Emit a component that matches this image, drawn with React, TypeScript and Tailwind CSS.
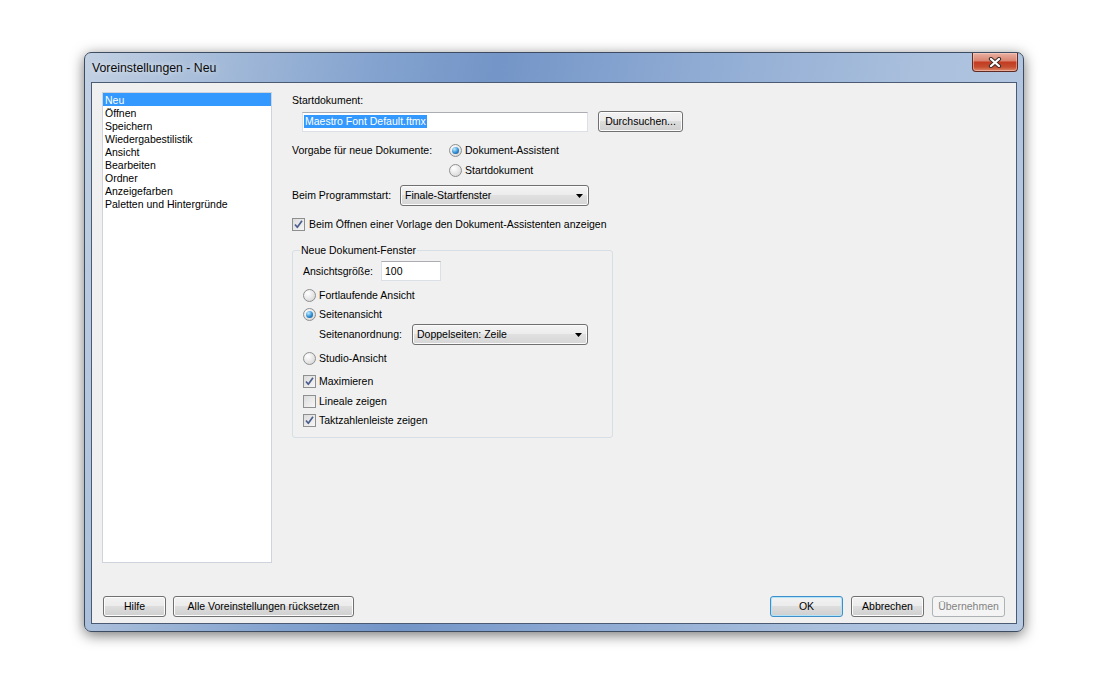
import type { ReactNode } from "react";

const LIST = [
  "Neu",
  "Öffnen",
  "Speichern",
  "Wiedergabestilistik",
  "Ansicht",
  "Bearbeiten",
  "Ordner",
  "Anzeigefarben",
  "Paletten und Hintergründe",
];

function Radio({ checked }: { checked?: boolean }) {
  return (
    <span className="flex h-[13px] w-[13px] shrink-0 items-center justify-center rounded-full border border-[#8e8f8f] bg-[radial-gradient(circle_at_35%_30%,#ffffff,#e6e6e6_55%,#cdcdcd)]">
      {checked && (
        <span className="h-[7px] w-[7px] rounded-full bg-[radial-gradient(circle_at_35%_30%,#c6ecfb,#2d8fd6_55%,#15406f)]" />
      )}
    </span>
  );
}

function Check({ checked }: { checked?: boolean }) {
  return (
    <span className="flex h-[13px] w-[13px] shrink-0 items-center justify-center border border-[#8e8f8f] bg-white">
      <span className="flex h-[11px] w-[11px] items-center justify-center bg-[linear-gradient(135deg,#dcdcdc,#f6f6f6)]">
        {checked && (
          <svg width="11" height="11" viewBox="0 0 11 11">
            <path
              d="M2 5.5 L4.3 8.3 L9 1.8"
              fill="none"
              stroke="#4a5f8f"
              strokeWidth="1.7"
              strokeLinejoin="round"
            />
          </svg>
        )}
      </span>
    </span>
  );
}

function Combo({ value, className }: { value: string; className: string }) {
  return (
    <div
      className={`flex h-[21px] items-center justify-between rounded-[3px] border border-[#707070] bg-[linear-gradient(#f4f4f4,#ececec_49%,#e0e0e0_50%,#d6d6d6)] pl-[4px] pr-[5px] shadow-[inset_0_0_0_1px_#fbfbfb] ${className}`}
    >
      <span>{value}</span>
      <svg width="7" height="4" viewBox="0 0 7 4">
        <path d="M0 0 H7 L3.5 4 Z" fill="#000" />
      </svg>
    </div>
  );
}

function Btn({
  children,
  className,
  primary,
  disabled,
}: {
  children: ReactNode;
  className: string;
  primary?: boolean;
  disabled?: boolean;
}) {
  const look = disabled
    ? "border-[#adb2b5] bg-[#f4f4f4] text-[#838383]"
    : primary
      ? "border-[#3c8fc9] bg-[linear-gradient(#f2f2f2,#ebebeb_49%,#dddddd_50%,#cfcfcf)] shadow-[inset_0_0_0_1px_#b4e4f8] text-black"
      : "border-[#707070] bg-[linear-gradient(#f2f2f2,#ebebeb_49%,#dddddd_50%,#cfcfcf)] shadow-[inset_0_0_0_1px_#fcfcfc] text-black";
  return (
    <div
      className={`flex h-[21px] items-center justify-center rounded-[3px] border ${look} ${className}`}
    >
      {children}
    </div>
  );
}

export default function App() {
  return (
    <div className="h-[700px] w-[1096px] bg-white pl-[84px] pt-[52px] font-['Liberation_Sans',Arial,sans-serif] text-[10.5px] leading-[13px] text-black">
      <div className="flex h-[580px] w-[940px] flex-col rounded-[7px] border border-[#3d4c61] bg-[linear-gradient(100deg,#c3d1e3_0%,#a6bcd9_12%,#84a3cf_28%,#7395c7_40%,#8eaad3_58%,#a9bfdc_80%,#b9cbe3_100%)] shadow-[0_3px_14px_rgba(0,0,0,0.55)]">
        {/* title bar */}
        <div className="flex h-[29px] shrink-0 items-start justify-between">
          <span className="ml-[7px] mt-[8px] text-[12.3px] leading-[15px] text-[#0a0a0a] [text-shadow:0_0_6px_rgba(255,255,255,0.8)]">
            Voreinstellungen - Neu
          </span>
          <div className="mr-[5px] flex h-[19px] w-[46px] items-center justify-center rounded-b-[4px] border border-t-0 border-[#5e2b24] bg-[linear-gradient(#eab1a3,#d98571_42%,#c23c22_52%,#c64e30_78%,#de8a6c)] shadow-[inset_0_0_0_1px_rgba(255,220,210,0.45)]">
            <svg width="16" height="11" viewBox="0 0 16 11">
              <path
                d="M4 2 L12 9 M12 2 L4 9"
                stroke="#3a2a28"
                strokeWidth="4.2"
                strokeLinecap="round"
              />
              <path
                d="M4 2 L12 9 M12 2 L4 9"
                stroke="#ffffff"
                strokeWidth="2.3"
                strokeLinecap="round"
              />
            </svg>
          </div>
        </div>

        {/* client area */}
        <div className="mx-[6px] mb-[7px] flex flex-1 flex-col border border-[#4a5b73] bg-[#f0f0f0]">
          <div className="flex">
            {/* category list */}
            <div className="ml-[10px] mt-[9px] h-[471px] w-[170px] border border-[#cfd3db] bg-white">
              {LIST.map((item, i) => (
                <div
                  key={item}
                  className={`h-[13px] pl-[2px] pt-px leading-[12px] ${i === 0 ? "bg-[#3399ff] text-white" : ""}`}
                >
                  {item}
                </div>
              ))}
            </div>

            {/* settings */}
            <div className="ml-[20px] mt-[9px] flex flex-col">
              <div className="mt-[2px]">Startdokument:</div>
              <div className="mt-[4px] flex items-center">
                <div className="ml-[10px] flex h-[20px] w-[286px] items-center border border-[#dbdfe6] border-t-[#abadb3] bg-white pl-[1px]">
                  <span className="bg-[#3399ff] px-[1px] text-white">
                    Maestro Font Default.ftmx
                  </span>
                </div>
                <Btn className="ml-[10px] w-[85px]">Durchsuchen...</Btn>
              </div>

              <div className="mt-[8px] flex">
                <div className="flex h-[20px] w-[157px] items-center">
                  Vorgabe für neue Dokumente:
                </div>
                <div className="flex flex-col">
                  <div className="flex h-[20px] items-center gap-[3px]">
                    <Radio checked />
                    <span>Dokument-Assistent</span>
                  </div>
                  <div className="flex h-[20px] items-center gap-[3px]">
                    <Radio />
                    <span>Startdokument</span>
                  </div>
                </div>
              </div>

              <div className="mt-[5px] flex items-center">
                <div className="w-[108px]">Beim Programmstart:</div>
                <Combo value="Finale-Startfenster" className="w-[189px]" />
              </div>

              <div className="mt-[8px] flex h-[20px] items-center gap-[4px]">
                <Check checked />
                <span>Beim Öffnen einer Vorlage den Dokument-Assistenten anzeigen</span>
              </div>

              <fieldset className="mt-[10px] w-[321px] rounded-[3px] border border-[#d5dfe5] pb-[7px]">
                <legend className="ml-[7px] px-[1px]">Neue Dokument-Fenster</legend>
                <div className="flex flex-col pl-[10px]">
                  <div className="mt-[4px] flex h-[20px] items-center">
                    <div className="w-[78px]">Ansichtsgröße:</div>
                    <div className="flex h-[20px] w-[60px] items-center border border-[#dbdfe6] border-t-[#abadb3] bg-white pl-[3px]">
                      100
                    </div>
                  </div>
                  <div className="mt-[4px] flex h-[20px] items-center gap-[3px]">
                    <Radio />
                    <span>Fortlaufende Ansicht</span>
                  </div>
                  <div className="flex h-[19px] items-center gap-[3px]">
                    <Radio checked />
                    <span>Seitenansicht</span>
                  </div>
                  <div className="flex items-center pl-[16px]">
                    <div className="w-[93px]">Seitenanordnung:</div>
                    <Combo value="Doppelseiten: Zeile" className="w-[176px]" />
                  </div>
                  <div className="mt-[3px] flex h-[20px] items-center gap-[3px]">
                    <Radio />
                    <span>Studio-Ansicht</span>
                  </div>
                  <div className="mt-[3px] flex h-[20px] items-center gap-[3px]">
                    <Check checked />
                    <span>Maximieren</span>
                  </div>
                  <div className="flex h-[20px] items-center gap-[3px]">
                    <Check />
                    <span>Lineale zeigen</span>
                  </div>
                  <div className="flex h-[19px] items-center gap-[3px]">
                    <Check checked />
                    <span>Taktzahlenleiste zeigen</span>
                  </div>
                </div>
              </fieldset>
            </div>
          </div>

          {/* bottom buttons */}
          <div className="mt-[33px] flex items-center px-[11px]">
            <Btn className="w-[63px]">Hilfe</Btn>
            <Btn className="ml-[7px] w-[181px]">Alle Voreinstellungen rücksetzen</Btn>
            <div className="ml-auto flex gap-[8px]">
              <Btn primary className="w-[73px]">
                OK
              </Btn>
              <Btn className="w-[73px]">Abbrechen</Btn>
              <Btn disabled className="w-[73px]">
                Übernehmen
              </Btn>
            </div>
          </div>
        </div>
      </div>
    </div>
  );
}
